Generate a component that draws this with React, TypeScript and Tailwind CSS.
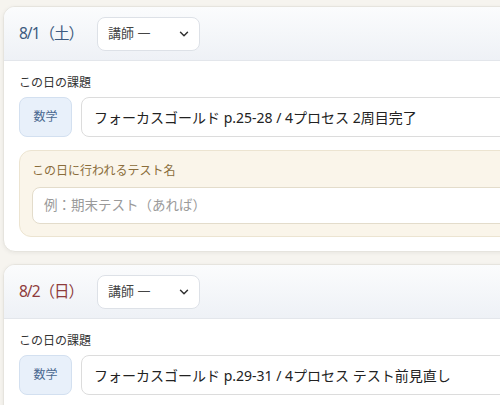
import { ChevronDown } from "lucide-react";

const days = [
  { date: "8/1（土）", color: "text-[#3d5a80]", task: "フォーカスゴールド p.25-28 / 4プロセス 2周目完了", test: true },
  { date: "8/2（日）", color: "text-[#8e3b3b]", task: "フォーカスゴールド p.29-31 / 4プロセス テスト前見直し", test: true },
];

function DayCard({ day }: { day: (typeof days)[number] }) {
  return (
    <div className="w-[560px] shrink-0 bg-white border border-[#e6e4de] rounded-xl shadow-[0_1px_4px_rgba(0,0,0,0.06)] overflow-hidden">
      <div className="h-[54px] flex items-center pl-[15px] bg-gradient-to-b from-[#fbfcfd] to-[#eef1f6] border-b border-[#e3e6eb]">
        <span className={`w-[78px] shrink-0 whitespace-nowrap text-[15.5px] tracking-[-1px] ${day.color}`}>{day.date}</span>
        <div className="w-[103px] h-[34px] flex items-center justify-between pl-[10px] pr-[8px] bg-white border border-[#dde1e7] rounded-lg text-[13px] text-[#444]">
          <span>講師 一</span>
          <ChevronDown className="w-[14px] h-[14px] text-[#333]" strokeWidth={2.5} />
        </div>
      </div>
      <div className="pl-[15px] pt-[13px] pb-[14px]">
        <div className="text-[12px] text-[#333] leading-[18px] mb-[5px]">この日の課題</div>
        <div className="flex gap-[9px]">
          <div className="w-[53px] h-[40px] flex items-center justify-center bg-[#e8f0fa] border border-[#d3e0f0] rounded-lg text-[12px] text-[#4a6890]">数学</div>
          <div className="flex-1 h-[40px] flex items-center pl-[12px] bg-white border border-[#dcdcdc] rounded-lg text-[14px] text-[#222]">
            {day.task}
          </div>
        </div>
        {day.test && (
          <div className="mt-[13px] bg-[#faf5ea] border border-[#ece4d1] rounded-xl pl-[12px] pt-[11px] pb-[12px]">
            <div className="text-[12px] text-[#8a6d3b] leading-[18px] mb-[7px]">この日に行われるテスト名</div>
            <div className="h-[37px] flex items-center pl-[11px] bg-white border border-[#e3dccb] rounded-lg text-[13.5px] text-[#9a9a9a]">
              例：期末テスト（あれば）
            </div>
          </div>
        )}
      </div>
    </div>
  );
}

export default function App() {
  return (
    <div
      className="w-[500px] h-[405px] overflow-hidden bg-[#f6f4ef] pl-[3px] pt-[6px] flex flex-col gap-[12px]"
      style={{ fontFamily: '"Noto Sans", "Noto Sans CJK JP", sans-serif' }}
    >
      {days.map((d) => (
        <DayCard key={d.date} day={d} />
      ))}
    </div>
  );
}
